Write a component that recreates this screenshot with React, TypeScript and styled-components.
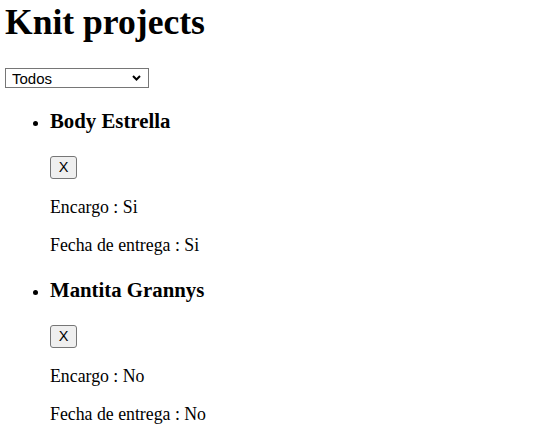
import React, { useState } from "react";
import styled, { createGlobalStyle } from "styled-components";

const GlobalStyle = createGlobalStyle`
  html, body {
    margin: 0;
    padding: 0;
    background: #ffffff;
    color: #000000;
    font-family: "Liberation Serif", "Times New Roman", serif;
    font-size: 17.6px;
  }
`;

const Page = styled.div`
  padding: 2px 0 0 5px;
`;

const Title = styled.h1`
  margin: 0;
  font-size: 35.6px;
  line-height: 40px;
  font-weight: bold;
`;

const SelectWrap = styled.div`
  position: relative;
  width: 144px;
  height: 20px;
  margin-top: 26px;
`;

const Select = styled.select`
  appearance: none;
  -webkit-appearance: none;
  display: block;
  box-sizing: border-box;
  width: 144px;
  height: 20px;
  margin: 0;
  padding: 1px 0 0 6px;
  border: 1px solid #767676;
  border-radius: 0;
  background: #ffffff;
  color: #000000;
  font-family: "Liberation Sans", Arial, sans-serif;
  font-size: 15px;
  line-height: 18px;
  outline: none;
`;

const Chevron = styled.svg`
  position: absolute;
  left: 127px;
  top: 7px;
  width: 9px;
  height: 6px;
  pointer-events: none;
`;

const List = styled.ul`
  margin: 0;
  padding: 0 0 0 45px;
  list-style: disc;
`;

const Item = styled.li`
  font-size: 17.6px;
`;

const ItemTitle = styled.h3<{ $first?: boolean }>`
  margin: ${(p) => (p.$first ? "21px" : "22px")} 0 23px;
  font-size: 20.8px;
  line-height: 24px;
  font-weight: bold;
`;

const DeleteButton = styled.button`
  display: block;
  box-sizing: border-box;
  width: 27px;
  height: 23px;
  margin: 0;
  padding: 0;
  border: 1px solid #767676;
  border-radius: 3px;
  background: #efefef;
  color: #000000;
  font-family: "Liberation Sans", Arial, sans-serif;
  font-size: 14.5px;
  line-height: 21px;
  text-align: center;
`;

const Detail = styled.p`
  margin: 17.6px 0;
  font-size: 17.8px;
  line-height: 21px;
`;

type Project = { name: string; encargo: string; fecha: string };

const initial: Project[] = [
  { name: "Body Estrella", encargo: "Si", fecha: "Si" },
  { name: "Mantita Grannys", encargo: "No", fecha: "No" },
];

export default function App() {
  const [projects, setProjects] = useState<Project[]>(initial);
  const [filter, setFilter] = useState("Todos");

  return (
    <>
      <GlobalStyle />
      <Page>
        <Title>Knit projects</Title>
        <SelectWrap>
          <Select value={filter} onChange={(e) => setFilter(e.target.value)}>
            <option>Todos</option>
            <option>Encargos</option>
            <option>Propios</option>
          </Select>
          <Chevron viewBox="0 0 9 6">
            <polyline
              points="1,1 4.5,4.5 8,1"
              fill="none"
              stroke="#000"
              strokeWidth="2"
            />
          </Chevron>
        </SelectWrap>
        <List>
          {projects.map((p, i) => (
            <Item key={p.name}>
              <ItemTitle $first={i === 0}>{p.name}</ItemTitle>
              <DeleteButton
                onClick={() =>
                  setProjects((list) => list.filter((x) => x.name !== p.name))
                }
              >
                X
              </DeleteButton>
              <Detail>Encargo : {p.encargo}</Detail>
              <Detail>Fecha de entrega : {p.fecha}</Detail>
            </Item>
          ))}
        </List>
      </Page>
    </>
  );
}
